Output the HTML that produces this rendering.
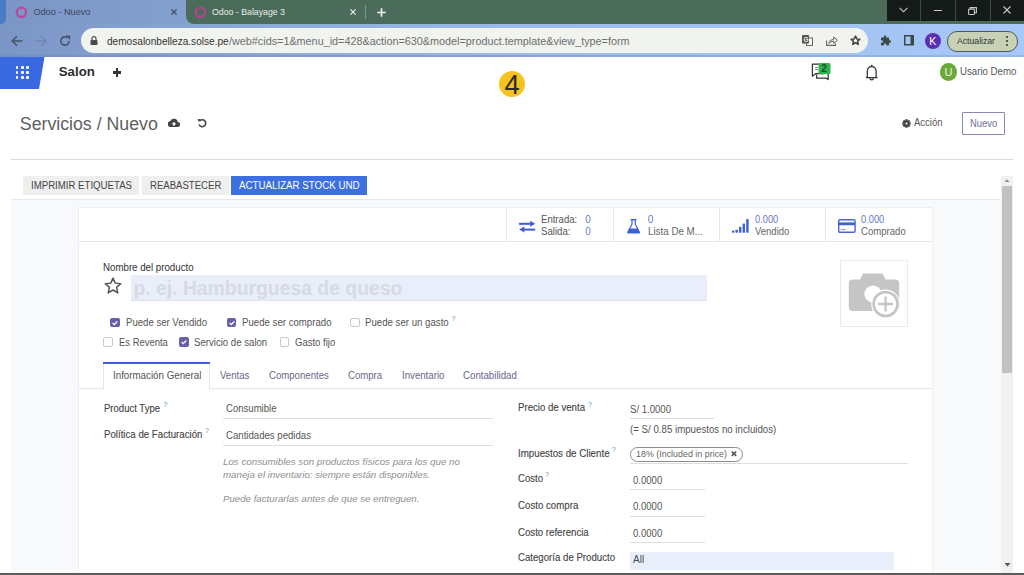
<!DOCTYPE html>
<html><head><meta charset="utf-8"><style>
html,body{margin:0;padding:0;width:1024px;height:575px;overflow:hidden;background:#fff}
body{position:relative;font-family:"Liberation Sans",sans-serif}
body>div,body>svg{position:absolute;box-sizing:content-box}
.t{white-space:nowrap;line-height:1}
</style></head><body>
<div style="left:0px;top:0px;width:1024px;height:24px;background:#4b6c5a"></div>
<div style="left:6px;top:0;width:180px;height:26px;background:linear-gradient(90deg,#7b96c6,#83a0cf);border-radius:0 0 0 0"></div>
<div style="left:0px;top:14px;width:6px;height:12px;background:#7b96c6"></div>
<div style="left:0px;top:0;width:5.6px;height:24px;background:#4a7bc6;border-radius:0 0 5px 0"></div>
<div style="left:186px;top:16px;width:8px;height:10px;background:#84a0d0"></div>
<div style="left:186px;top:12px;width:8px;height:12px;background:#4b6c5a;border-radius:0 0 0 8px"></div>
<svg style="left:14.5px;top:6px" width="13" height="13" viewBox="0 0 13 13"><circle cx="6.4" cy="6.3" r="4.7" stroke="#bd459c" stroke-width="2.3" fill="none"/></svg>
<div class="t" style="left:33.40px;top:8.05px;font-size:9.16px;color:#3a4660;">Odoo - Nuevo</div>
<svg style="left:170.8px;top:9.2px" width="6" height="6" viewBox="0 0 6 6"><path d="M0.4 0.4 L5.6 5.6 M5.6 0.4 L0.4 5.6" stroke="#3a4660" stroke-width="1.2"/></svg>
<svg style="left:193.5px;top:6px" width="13" height="13" viewBox="0 0 13 13"><circle cx="6.4" cy="6.3" r="4.7" stroke="#b2428f" stroke-width="2.3" fill="none"/></svg>
<div class="t" style="left:212.00px;top:8.39px;font-size:8.75px;color:#e8ece9;">Odoo - Balayage 3</div>
<svg style="left:349.8px;top:9.2px" width="6" height="6" viewBox="0 0 6 6"><path d="M0.4 0.4 L5.6 5.6 M5.6 0.4 L0.4 5.6" stroke="#e8ece9" stroke-width="1.2"/></svg>
<div style="left:365px;top:5px;width:1px;height:14px;background:#7f9988"></div>
<svg style="left:377px;top:8.3px" width="9" height="9" viewBox="0 0 9 9"><path d="M4.5 0.2 V8.8 M0.2 4.5 H8.8" stroke="#f0f0f0" stroke-width="1.7"/></svg>
<div style="left:887px;top:0px;width:137px;height:21px;background:#151b18"></div>
<div style="left:920px;top:0px;width:1px;height:21px;background:#3b4a42"></div>
<div style="left:955px;top:0px;width:1px;height:21px;background:#3b4a42"></div>
<div style="left:990px;top:0px;width:1px;height:21px;background:#3b4a42"></div>
<svg style="left:899px;top:7px" width="9" height="6" viewBox="0 0 9 6"><path d="M0.6 0.8 L4.5 4.8 L8.4 0.8" stroke="#c8c8c8" stroke-width="1.1" fill="none"/></svg>
<div style="left:934px;top:9.8px;width:8px;height:1.1px;background:#c8c8c8"></div>
<svg style="left:967.5px;top:6.5px" width="9" height="8" viewBox="0 0 9 8"><rect x="0.6" y="2.1" width="5.8" height="5.4" rx="0.8" stroke="#c8c8c8" stroke-width="1.1" fill="none"/><path d="M2.2 2.1 V0.6 H8.4 V5.8 H6.4" stroke="#c8c8c8" stroke-width="1.1" fill="none"/></svg>
<svg style="left:1003px;top:6.3px" width="8" height="8" viewBox="0 0 8 8"><path d="M0.5 0.5 L7.5 7.5 M7.5 0.5 L0.5 7.5" stroke="#c8c8c8" stroke-width="1.1" fill="none"/></svg>
<div style="left:0px;top:24px;width:1024px;height:33px;background:linear-gradient(90deg,#7b96c6 0%,#89a5d4 20%,#9cbae9 50%,#a2c2f1 75%,#a7c8f8 100%)"></div>
<div style="left:0px;top:55px;width:1024px;height:2px;background:linear-gradient(90deg,#7690c0,#98b8e6)"></div>
<svg style="left:10.5px;top:35px" width="12" height="12" viewBox="0 0 12 12"><path d="M11.5 6 H1.5 M6 1.2 L1.2 6 L6 10.8" stroke="#46536a" stroke-width="1.5" fill="none"/></svg>
<svg style="left:35px;top:35px" width="12" height="12" viewBox="0 0 12 12"><path d="M0.5 6 H10.5 M6 1.2 L10.8 6 L6 10.8" stroke="#7088b0" stroke-width="1.5" fill="none"/></svg>
<svg style="left:58.5px;top:35px" width="12" height="12" viewBox="0 0 12 12"><path d="M10.2 6 A4.2 4.2 0 1 1 8.8 2.9" stroke="#46536a" stroke-width="1.6" fill="none"/><path d="M6.8 0.6 H11.2 V5 Z" fill="#46536a"/></svg>
<div style="left:81px;top:28px;width:787px;height:25px;background:#f1f3ee;border-radius:13px"></div>
<svg style="left:90px;top:36px" width="8" height="9" viewBox="0 0 8 9"><path d="M2 4 V2.6 A2 2 0 0 1 6 2.6 V4" stroke="#4a4a4a" stroke-width="1.2" fill="none"/><rect x="0.5" y="4" width="7" height="5" rx="0.8" fill="#4a4a4a"/></svg>
<div class="t" style="left:106.60px;top:35.97px;font-size:10.67px;color:#333;transform:scaleX(0.9463);transform-origin:0 0;">demosalonbelleza.solse.pe</div>
<div class="t" style="left:228.60px;top:35.97px;font-size:10.67px;color:#6e6e6e;transform:scaleX(1.0144);transform-origin:0 0;">/web#cids=1&amp;menu_id=428&amp;action=630&amp;model=product.template&amp;view_type=form</div>
<svg style="left:802px;top:35px" width="11" height="11" viewBox="0 0 11 11"><rect x="4.5" y="3" width="6" height="7.5" fill="#f4f4f0" stroke="#666" stroke-width="1"/><rect x="0" y="0" width="7" height="8.5" rx="0.8" fill="#555"/><text x="1.4" y="6.8" font-size="6.5" font-weight="bold" fill="#f1f3ee" font-family="Liberation Sans">G</text></svg>
<svg style="left:826px;top:36px" width="12" height="10" viewBox="0 0 12 10"><path d="M0.6 4.5 V9.4 H9.5 V7.5" stroke="#666" stroke-width="1.1" fill="none"/><path d="M2.8 7.3 Q3.5 3.3 7.8 3.3 V1 L11.4 4.2 L7.8 7.4 V5.2 Q4.8 5.2 2.8 7.3Z" stroke="#666" stroke-width="1" fill="none" stroke-linejoin="round"/></svg>
<svg style="left:849.8px;top:35.4px" width="11" height="11" viewBox="0 0 24 24"><path d="M12 2.5 L14.9 8.6 L21.5 9.3 L16.5 13.8 L18 20.5 L12 17 L6 20.5 L7.5 13.8 L2.5 9.3 L9.1 8.6 Z" stroke="#444" stroke-width="3.4" fill="none" stroke-linejoin="round"/></svg>
<svg style="left:879.5px;top:34.8px" width="11.5" height="11.5" viewBox="0 0 24 24"><path d="M20.5 11H19V7c0-1.1-.9-2-2-2h-4V3.5C13 2.120 11.88 1 10.5 1S8 2.12 8 3.5V5H4c-1.1 0-1.99.9-1.99 2v3.8H3.5c1.49 0 2.7 1.21 2.7 2.7s-1.21 2.7-2.7 2.7H2V20c0 1.1.9 2 2 2h3.8v-1.5c0-1.490 1.21-2.7 2.7-2.7 1.49 0 2.7 1.21 2.7 2.7V22H17c1.1 0 2-.9 2-2v-4h1.5c1.38 0 2.5-1.12 2.5-2.5S21.88 11 20.5 11z" fill="#3d4a44"/></svg>
<svg style="left:903.8px;top:35.3px" width="10.5" height="10.5" viewBox="0 0 10.5 10.5"><rect x="0.75" y="0.75" width="9" height="9" stroke="#3d4a44" stroke-width="1.5" fill="none"/><rect x="6.5" y="0.5" width="3.6" height="9.5" fill="#3d4a44"/></svg>
<div style="left:925px;top:32.5px;width:16px;height:16px;border-radius:50%;background:#5b2fb3"></div>
<div class="t" style="left:929.30px;top:35.61px;font-size:10.50px;color:#fff;">K</div>
<div style="left:947px;top:30.5px;width:69px;height:19px;border-radius:10px;background:#c8d1b5;border:1px solid #4d5a55"></div>
<div class="t" style="left:957.00px;top:36.97px;font-size:8.66px;color:#2b3530;">Actualizar</div>
<div style="left:1006px;top:36px;width:2.4px;height:2.4px;background:#2b3530;border-radius:50%"></div>
<div style="left:1006px;top:40px;width:2.4px;height:2.4px;background:#2b3530;border-radius:50%"></div>
<div style="left:1006px;top:44px;width:2.4px;height:2.4px;background:#2b3530;border-radius:50%"></div>
<div style="left:0px;top:57px;width:1024px;height:32px;background:#fff"></div>
<svg style="left:0;top:57px" width="45" height="32" viewBox="0 0 45 32"><path d="M0 0 H44.5 L39 32 H0 Z" fill="#3a68e0"/></svg>
<div style="left:15.750000000000002px;top:65.95px;width:2.7px;height:2.7px;background:#fff;border-radius:1px"></div>
<div style="left:15.750000000000002px;top:71.05000000000001px;width:2.7px;height:2.7px;background:#fff;border-radius:1px"></div>
<div style="left:15.750000000000002px;top:76.15px;width:2.7px;height:2.7px;background:#fff;border-radius:1px"></div>
<div style="left:21.049999999999997px;top:65.95px;width:2.7px;height:2.7px;background:#fff;border-radius:1px"></div>
<div style="left:21.049999999999997px;top:71.05000000000001px;width:2.7px;height:2.7px;background:#fff;border-radius:1px"></div>
<div style="left:21.049999999999997px;top:76.15px;width:2.7px;height:2.7px;background:#fff;border-radius:1px"></div>
<div style="left:26.349999999999998px;top:65.95px;width:2.7px;height:2.7px;background:#fff;border-radius:1px"></div>
<div style="left:26.349999999999998px;top:71.05000000000001px;width:2.7px;height:2.7px;background:#fff;border-radius:1px"></div>
<div style="left:26.349999999999998px;top:76.15px;width:2.7px;height:2.7px;background:#fff;border-radius:1px"></div>
<div class="t" style="left:58.80px;top:65.40px;font-size:13.22px;color:#2d2d2d;font-weight:bold;">Salon</div>
<div style="left:113px;top:71.3px;width:8.4px;height:2.3px;background:#333"></div>
<div style="left:116.05px;top:68.3px;width:2.3px;height:8.4px;background:#333"></div>
<svg style="left:811px;top:62px" width="21" height="19" viewBox="0 0 21 19"><path d="M1.4 2.2 H12 V11.6 H5 L1.4 14.2 Z" stroke="#333" stroke-width="1.2" fill="#fff" stroke-linejoin="round"/><path d="M4 5.5 H7 M4 7.5 H7" stroke="#777" stroke-width="0.9"/><path d="M5.6 12.4 V16.2 H15.2 L17.2 17.6 V7 H13" stroke="#333" stroke-width="1.2" fill="none" stroke-linejoin="round"/><rect x="7.5" y="0.9" width="12" height="11.3" rx="1.6" fill="#2fb34c"/><text x="10.3" y="10.2" font-size="10" font-weight="bold" fill="#1b4d28" font-family="Liberation Sans">2</text></svg>
<svg style="left:865px;top:63.5px" width="14" height="17" viewBox="0 0 14 17"><path d="M6.7 0.8 V2.4" stroke="#333" stroke-width="1.6"/><path d="M2.3 12.8 V7.6 C2.3 4.4 4.2 2.6 6.7 2.6 C9.2 2.6 11.1 4.4 11.1 7.6 V12.8 L12 13.6 H1.4 Z" stroke="#333" stroke-width="1.25" fill="none" stroke-linejoin="round"/><path d="M5 14.2 A1.7 1.6 0 0 0 8.4 14.2" stroke="#333" stroke-width="1.3" fill="none"/></svg>
<div style="left:940px;top:63.3px;width:17.4px;height:17.4px;border-radius:50%;background:#6aaa3c"></div>
<div class="t" style="left:944.60px;top:66.69px;font-size:11.00px;color:#eef5e0;">U</div>
<div class="t" style="left:960.30px;top:66.46px;font-size:10.80px;color:#555;transform:scaleX(0.8950);transform-origin:0 0;">Usario Demo</div>
<div style="left:498.6px;top:71px;width:26.4px;height:26.4px;border-radius:50%;background:#f6c31e"></div>
<div class="t" style="left:504.40px;top:70.89px;font-size:27.30px;color:#2b2b2b;">4</div>
<div class="t" style="left:19.80px;top:115.68px;font-size:17.74px;color:#5f5f5f;">Servicios / Nuevo</div>
<svg style="left:168px;top:117.5px" width="12" height="10" viewBox="0 0 24 20"><path d="M19.4 8 A7.5 7.5 0 0 0 5 6 A6 6 0 0 0 6 18 H19 A5 5 0 0 0 19.4 8Z" fill="#444"/><path d="M12 16 V10 M9 12.5 L12 9.5 L15 12.5" stroke="#fff" stroke-width="2.4" fill="none"/></svg>
<svg style="left:196.5px;top:118px" width="10" height="10" viewBox="0 0 20 20"><path d="M5 6 A7 7 0 1 1 4 13" stroke="#444" stroke-width="3.2" fill="none"/><path d="M1 2 L7.5 2.5 L3.5 8 Z" fill="#444"/></svg>
<svg style="left:901.8px;top:118.5px" width="9" height="9" viewBox="-4.5 -4.5 9 9"><rect x="-1.1" y="-4.3" width="2.2" height="2.4" transform="rotate(0)" fill="#444"/><rect x="-1.1" y="-4.3" width="2.2" height="2.4" transform="rotate(45)" fill="#444"/><rect x="-1.1" y="-4.3" width="2.2" height="2.4" transform="rotate(90)" fill="#444"/><rect x="-1.1" y="-4.3" width="2.2" height="2.4" transform="rotate(135)" fill="#444"/><rect x="-1.1" y="-4.3" width="2.2" height="2.4" transform="rotate(180)" fill="#444"/><rect x="-1.1" y="-4.3" width="2.2" height="2.4" transform="rotate(225)" fill="#444"/><rect x="-1.1" y="-4.3" width="2.2" height="2.4" transform="rotate(270)" fill="#444"/><rect x="-1.1" y="-4.3" width="2.2" height="2.4" transform="rotate(315)" fill="#444"/><circle r="3.1" fill="#444"/><circle r="1.1" fill="#fff"/></svg>
<div class="t" style="left:913.50px;top:117.41px;font-size:10.50px;color:#555;transform:scaleX(0.9043);transform-origin:0 0;">Acción</div>
<div style="left:962px;top:112px;width:41px;height:20.5px;border:1px solid #8a88b4;border-radius:1px"></div>
<div class="t" style="left:969.70px;top:117.61px;font-size:10.50px;color:#6f6d99;transform:scaleX(0.8962);transform-origin:0 0;">Nuevo</div>
<div style="left:10.7px;top:159px;width:1002.3px;height:1px;background:#dcdcdc"></div>
<div style="left:10.7px;top:199px;width:990.7px;height:376px;background:#f8f9fa"></div>
<div style="left:10.7px;top:198.6px;width:990.7px;height:1px;background:#e8e8e8"></div>
<div style="left:22.6px;top:176px;width:116.4px;height:19.2px;background:#efefef"></div>
<div class="t" style="left:30.50px;top:181.03px;font-size:10.00px;color:#444;transform:scaleX(0.9636);transform-origin:0 0;">IMPRIMIR ETIQUETAS</div>
<div style="left:141.7px;top:176px;width:87.2px;height:19.2px;background:#efefef"></div>
<div class="t" style="left:149.50px;top:181.03px;font-size:10.00px;color:#444;transform:scaleX(0.9575);transform-origin:0 0;">REABASTECER</div>
<div style="left:231.3px;top:176px;width:136px;height:19.2px;background:#3d6fe0"></div>
<div class="t" style="left:239.00px;top:181.03px;font-size:10.00px;color:#fff;transform:scaleX(0.9740);transform-origin:0 0;">ACTUALIZAR STOCK UND</div>
<div style="left:1001px;top:176px;width:12.2px;height:399px;background:#f1f1f1"></div>
<svg style="left:1004px;top:178px" width="6" height="5" viewBox="0 0 6 5"><path d="M0.5 4 L3 1.2 L5.5 4 Z" fill="#8a8a8a"/></svg>
<div style="left:1002.3px;top:186px;width:9.6px;height:187px;background:#c1c1c1"></div>
<svg style="left:1003.5px;top:562px" width="7" height="6" viewBox="0 0 7 6"><path d="M0.5 1 L3.5 4.5 L6.5 1 Z" fill="#555"/></svg>
<div style="left:78.6px;top:208px;width:853.8px;height:367px;background:#fff;box-shadow:0 0 0 1px #eceef0"></div>
<div style="left:505.9px;top:208px;width:1px;height:33.3px;background:#e6e6e6"></div>
<div style="left:612.6px;top:208px;width:1px;height:33.3px;background:#e6e6e6"></div>
<div style="left:719.4px;top:208px;width:1px;height:33.3px;background:#e6e6e6"></div>
<div style="left:825.3px;top:208px;width:1px;height:33.3px;background:#e6e6e6"></div>
<div style="left:78.6px;top:241.3px;width:853.8px;height:1px;background:#e6e6e6"></div>
<svg style="left:519px;top:219.5px" width="16.5" height="13" viewBox="0 0 16.5 13"><path d="M0 3.8 H12" stroke="#4559d4" stroke-width="2"/><path d="M11.2 0.8 L16.2 3.8 L11.2 6.8Z" fill="#4559d4"/><path d="M16.2 9.6 H4.5" stroke="#4559d4" stroke-width="2"/><path d="M5.3 6.6 L0.3 9.6 L5.3 12.6Z" fill="#4559d4"/></svg>
<div class="t" style="left:541.40px;top:215.23px;font-size:10.00px;color:#555;transform:scaleX(0.9577);transform-origin:0 0;">Entrada:</div>
<div class="t" style="left:541.40px;top:226.73px;font-size:10.00px;color:#555;transform:scaleX(0.9648);transform-origin:0 0;">Salida:</div>
<div class="t" style="left:585.20px;top:215.23px;font-size:10.00px;color:#6878c8;">0</div>
<div class="t" style="left:585.20px;top:226.73px;font-size:10.00px;color:#6878c8;">0</div>
<svg style="left:627px;top:218.6px" width="14" height="15" viewBox="0 0 14 15"><path d="M3.6 0.7 H9.6" stroke="#3d61d9" stroke-width="1.3"/><path d="M5 0.8 V5.2 L1 12.8 M8.2 0.8 V5.2 L12.2 12.8" stroke="#3d61d9" stroke-width="1.2" fill="none"/><path d="M2.6 9.4 H10.6 L13 13.3 Q13.3 14.4 12 14.4 H1.2 Q-0.1 14.4 0.2 13.3 Z" fill="#3d61d9"/></svg>
<div class="t" style="left:647.80px;top:214.93px;font-size:10.00px;color:#6878c8;">0</div>
<div class="t" style="left:647.80px;top:226.53px;font-size:10.00px;color:#666;transform:scaleX(0.9782);transform-origin:0 0;">Lista De M...</div>
<svg style="left:732px;top:219px" width="17" height="14" viewBox="0 0 17 14"><rect x="0" y="11.4" width="2.4" height="2.3" rx="0.6" fill="#3d61d9"/><rect x="3.5" y="10.8" width="2.4" height="2.9" rx="0.4" fill="#3d61d9"/><rect x="7" y="7.8" width="2.4" height="5.9" fill="#3d61d9"/><rect x="10.6" y="4.6" width="2.4" height="9.1" fill="#3d61d9"/><rect x="14.2" y="0" width="2.4" height="13.7" fill="#3d61d9"/></svg>
<div class="t" style="left:754.90px;top:214.93px;font-size:10.00px;color:#6878c8;transform:scaleX(0.9272);transform-origin:0 0;">0.000</div>
<div class="t" style="left:754.90px;top:226.53px;font-size:10.00px;color:#666;transform:scaleX(0.9489);transform-origin:0 0;">Vendido</div>
<svg style="left:838.4px;top:219px" width="18" height="14" viewBox="0 0 18 14"><rect x="0.7" y="0.7" width="16.4" height="12.6" rx="1.2" stroke="#4f62d2" stroke-width="1.4" fill="none"/><rect x="0.7" y="3.4" width="16.4" height="2.8" fill="#3d61d9"/><rect x="2.6" y="10" width="1.6" height="0.9" fill="#6b78c8"/><rect x="5" y="10" width="2.4" height="0.9" fill="#6b78c8"/></svg>
<div class="t" style="left:861.30px;top:214.93px;font-size:10.00px;color:#6878c8;transform:scaleX(0.9272);transform-origin:0 0;">0.000</div>
<div class="t" style="left:861.30px;top:226.53px;font-size:10.00px;color:#666;transform:scaleX(0.9575);transform-origin:0 0;">Comprado</div>
<div class="t" style="left:103.30px;top:262.63px;font-size:10.00px;color:#333;transform:scaleX(0.9703);transform-origin:0 0;">Nombre del producto</div>
<svg style="left:103.5px;top:277px" width="18" height="17" viewBox="0 0 24 23"><path d="M12 1.5 L15 8.3 L22.5 9 L16.8 14 L18.5 21.5 L12 17.6 L5.5 21.5 L7.2 14 L1.5 9 L9 8.3 Z" stroke="#555" stroke-width="2" fill="none" stroke-linejoin="round"/></svg>
<div style="left:130.6px;top:274.5px;width:576.1px;height:26.5px;background:#e9eefa;border-bottom:1px solid #dde1ea;box-sizing:border-box"></div>
<div class="t" style="left:133.40px;top:278.60px;font-size:19.36px;color:#d6dae3;font-weight:bold;">p. ej. Hamburguesa de queso</div>
<div style="left:840.2px;top:260.2px;width:67.6px;height:67.3px;border:1px solid #ebebeb;box-sizing:border-box;background:#fff"></div>
<svg style="left:848px;top:272px" width="54" height="47" viewBox="0 0 54 47"><path d="M15 1.5 H34.5 L37.5 7.5 H47 Q51.2 7.5 51.2 11.7 V35 Q51.2 39 47 39 H5 Q0.8 39 0.8 35 V11.7 Q0.8 7.5 5 7.5 H12 Z" fill="#c5c5c5"/><circle cx="25" cy="22" r="8.6" fill="#fff"/><circle cx="37.6" cy="32" r="14.4" fill="#fff"/><circle cx="37.6" cy="32" r="13.3" fill="#c5c5c5"/><circle cx="37.6" cy="32" r="10.6" fill="#fff"/><path d="M37.6 24.5 V39.5 M30.1 32 H45.1" stroke="#c5c5c5" stroke-width="2.4"/></svg>
<div style="left:110.3px;top:317.9px;width:9.6px;height:9.6px;background:#6b5fa5;border-radius:2px"></div>
<svg style="left:110.3px;top:317.9px" width="10" height="10" viewBox="0 0 10 10"><path d="M2.6 5 L4.3 6.6 L7.3 3.5" stroke="#fff" stroke-width="1.3" fill="none"/></svg>
<div class="t" style="left:126.00px;top:318.13px;font-size:10.00px;color:#555;transform:scaleX(0.9585);transform-origin:0 0;">Puede ser Vendido</div>
<div style="left:226.6px;top:317.9px;width:9.6px;height:9.6px;background:#6b5fa5;border-radius:2px"></div>
<svg style="left:226.6px;top:317.9px" width="10" height="10" viewBox="0 0 10 10"><path d="M2.6 5 L4.3 6.6 L7.3 3.5" stroke="#fff" stroke-width="1.3" fill="none"/></svg>
<div class="t" style="left:241.50px;top:318.13px;font-size:10.00px;color:#555;transform:scaleX(0.9642);transform-origin:0 0;">Puede ser comprado</div>
<div style="left:350.1px;top:317.9px;width:9.6px;height:9.6px;border:1px solid #c8c8c8;border-radius:2px;box-sizing:border-box;background:#fff"></div>
<div class="t" style="left:365.30px;top:318.13px;font-size:10.00px;color:#555;transform:scaleX(0.9652);transform-origin:0 0;">Puede ser un gasto</div>
<div class="t" style="left:451.50px;top:315.07px;font-size:7.00px;color:#5a95c4;">?</div>
<div style="left:103px;top:337.4px;width:9.6px;height:9.6px;border:1px solid #c8c8c8;border-radius:2px;box-sizing:border-box;background:#fff"></div>
<div class="t" style="left:118.50px;top:337.63px;font-size:10.00px;color:#555;transform:scaleX(0.9440);transform-origin:0 0;">Es Reventa</div>
<div style="left:179.3px;top:337.4px;width:9.6px;height:9.6px;background:#6b5fa5;border-radius:2px"></div>
<svg style="left:179.3px;top:337.4px" width="10" height="10" viewBox="0 0 10 10"><path d="M2.6 5 L4.3 6.6 L7.3 3.5" stroke="#fff" stroke-width="1.3" fill="none"/></svg>
<div class="t" style="left:194.40px;top:337.63px;font-size:10.00px;color:#555;transform:scaleX(0.9613);transform-origin:0 0;">Servicio de salon</div>
<div style="left:279.8px;top:337.4px;width:9.6px;height:9.6px;border:1px solid #c8c8c8;border-radius:2px;box-sizing:border-box;background:#fff"></div>
<div class="t" style="left:294.50px;top:337.63px;font-size:10.00px;color:#555;transform:scaleX(0.9517);transform-origin:0 0;">Gasto fijo</div>
<div style="left:78.6px;top:388px;width:853.8px;height:1px;background:#e6e6e6"></div>
<div style="left:103.2px;top:362px;width:107px;height:27px;background:#fff;border-left:1px solid #e6e6e6;border-right:1px solid #e6e6e6;box-sizing:border-box"></div>
<div style="left:103.2px;top:361.8px;width:107px;height:2px;background:#3d61d9"></div>
<div class="t" style="left:113.00px;top:371.43px;font-size:10.00px;color:#555;transform:scaleX(0.9747);transform-origin:0 0;">Información General</div>
<div class="t" style="left:220.00px;top:371.43px;font-size:10.00px;color:#67678a;transform:scaleX(0.9582);transform-origin:0 0;">Ventas</div>
<div class="t" style="left:269.00px;top:371.43px;font-size:10.00px;color:#67678a;transform:scaleX(0.9605);transform-origin:0 0;">Componentes</div>
<div class="t" style="left:348.30px;top:371.43px;font-size:10.00px;color:#67678a;transform:scaleX(0.9560);transform-origin:0 0;">Compra</div>
<div class="t" style="left:401.60px;top:371.43px;font-size:10.00px;color:#67678a;transform:scaleX(0.9656);transform-origin:0 0;">Inventario</div>
<div class="t" style="left:463.00px;top:371.43px;font-size:10.00px;color:#67678a;transform:scaleX(0.9696);transform-origin:0 0;">Contabilidad</div>
<div class="t" style="left:103.60px;top:403.83px;font-size:10.00px;color:#444;transform:scaleX(0.9534);transform-origin:0 0;-webkit-text-stroke:0.12px #444">Product Type</div>
<div class="t" style="left:163.50px;top:401.07px;font-size:7.00px;color:#5a95c4;">?</div>
<div class="t" style="left:226.30px;top:403.93px;font-size:10.00px;color:#555;transform:scaleX(0.9564);transform-origin:0 0;">Consumible</div>
<div style="left:223px;top:418px;width:270.2px;height:1px;background:#dedede"></div>
<div class="t" style="left:103.60px;top:429.53px;font-size:10.00px;color:#444;transform:scaleX(0.9674);transform-origin:0 0;-webkit-text-stroke:0.12px #444">Política de Facturación</div>
<div class="t" style="left:205.00px;top:426.57px;font-size:7.00px;color:#5a95c4;">?</div>
<div class="t" style="left:226.30px;top:430.93px;font-size:10.00px;color:#555;transform:scaleX(0.9616);transform-origin:0 0;">Cantidades pedidas</div>
<div style="left:223px;top:445px;width:270.2px;height:1px;background:#dedede"></div>
<div class="t" style="left:223.00px;top:457.17px;font-size:9.60px;color:#8e8e8e;font-style:italic;transform:scaleX(1.0164);transform-origin:0 0;">Los consumibles son productos físicos para los que no</div>
<div class="t" style="left:223.00px;top:470.47px;font-size:9.60px;color:#8e8e8e;font-style:italic;transform:scaleX(1.0117);transform-origin:0 0;">maneja el inventario: siempre están disponibles.</div>
<div class="t" style="left:223.00px;top:493.87px;font-size:9.60px;color:#8e8e8e;font-style:italic;transform:scaleX(1.0088);transform-origin:0 0;">Puede facturarlas antes de que se entreguen.</div>
<div class="t" style="left:518.20px;top:403.43px;font-size:10.00px;color:#444;transform:scaleX(0.9643);transform-origin:0 0;-webkit-text-stroke:0.12px #444">Precio de venta</div>
<div class="t" style="left:588.00px;top:400.57px;font-size:7.00px;color:#5a95c4;">?</div>
<div class="t" style="left:630.30px;top:404.83px;font-size:10.00px;color:#555;transform:scaleX(0.9577);transform-origin:0 0;">S/ 1.0000</div>
<div style="left:630px;top:418px;width:83.7px;height:1px;background:#dedede"></div>
<div class="t" style="left:630.30px;top:425.33px;font-size:10.00px;color:#555;transform:scaleX(0.9695);transform-origin:0 0;">(= S/ 0.85 impuestos no incluidos)</div>
<div class="t" style="left:518.20px;top:448.53px;font-size:10.00px;color:#444;transform:scaleX(0.9751);transform-origin:0 0;-webkit-text-stroke:0.12px #444">Impuestos de Cliente</div>
<div class="t" style="left:612.00px;top:445.57px;font-size:7.00px;color:#5a95c4;">?</div>
<div style="left:629.8px;top:447.2px;width:113.2px;height:14.4px;border:1px solid #8c8c8c;border-radius:8px;box-sizing:border-box"></div>
<div class="t" style="left:636.20px;top:449.98px;font-size:9.00px;color:#666;transform:scaleX(0.9887);transform-origin:0 0;">18% (Included in price)</div>
<svg style="left:731px;top:451px" width="6" height="5.5" viewBox="0 0 6 5.5"><path d="M0.8 0.7 L5.2 4.8 M5.2 0.7 L0.8 4.8" stroke="#555" stroke-width="1.6"/></svg>
<div style="left:630px;top:463px;width:277.5px;height:1px;background:#dedede"></div>
<div class="t" style="left:518.20px;top:474.23px;font-size:10.00px;color:#444;transform:scaleX(0.9571);transform-origin:0 0;-webkit-text-stroke:0.12px #444">Costo</div>
<div class="t" style="left:545.00px;top:471.07px;font-size:7.00px;color:#5a95c4;">?</div>
<div class="t" style="left:632.90px;top:476.23px;font-size:10.00px;color:#555;transform:scaleX(0.9548);transform-origin:0 0;">0.0000</div>
<div style="left:630px;top:489px;width:74.5px;height:1px;background:#dedede"></div>
<div class="t" style="left:518.20px;top:500.63px;font-size:10.00px;color:#444;transform:scaleX(0.9688);transform-origin:0 0;-webkit-text-stroke:0.12px #444">Costo compra</div>
<div class="t" style="left:632.90px;top:502.43px;font-size:10.00px;color:#555;transform:scaleX(0.9548);transform-origin:0 0;">0.0000</div>
<div style="left:630px;top:516.3px;width:74.5px;height:1px;background:#dedede"></div>
<div class="t" style="left:518.20px;top:527.53px;font-size:10.00px;color:#444;transform:scaleX(0.9637);transform-origin:0 0;-webkit-text-stroke:0.12px #444">Costo referencia</div>
<div class="t" style="left:632.90px;top:529.33px;font-size:10.00px;color:#555;transform:scaleX(0.9548);transform-origin:0 0;">0.0000</div>
<div style="left:630px;top:541.6px;width:74.5px;height:1px;background:#dedede"></div>
<div class="t" style="left:518.20px;top:553.03px;font-size:10.00px;color:#444;transform:scaleX(0.9641);transform-origin:0 0;-webkit-text-stroke:0.12px #444">Categoría de Producto</div>
<div style="left:629.9px;top:551.8px;width:264.2px;height:17.8px;background:#e8eefa"></div>
<div class="t" style="left:632.90px;top:554.73px;font-size:10.00px;color:#4a4a4a;transform:scaleX(1.0077);transform-origin:0 0;">All</div>
<div style="left:0px;top:573.4px;width:1024px;height:1.6px;background:#5c5c5c"></div>
</body></html>
